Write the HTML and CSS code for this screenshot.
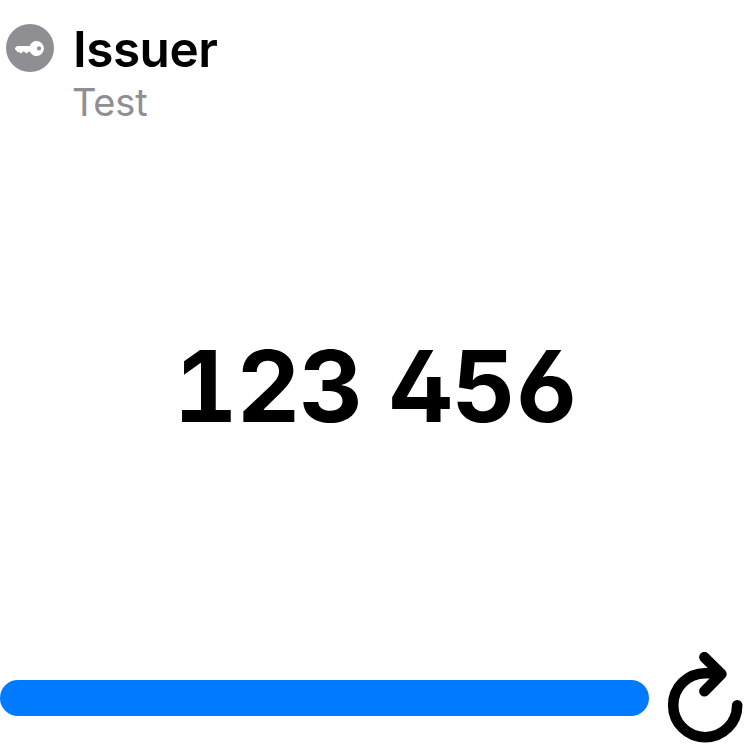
FILE: index.html
```
<!DOCTYPE html>
<html lang="en">
<head>
<meta charset="utf-8">
<title>Issuer</title>
<link rel="stylesheet" href="styles.css">
</head>
<body>
<main class="widget">
  <header class="account">
    <svg class="key" viewBox="0 0 48 48" aria-hidden="true">
      <circle cx="24" cy="24" r="24" fill="#8e8e93"/>
      <path fill="#fff" fill-rule="evenodd" d="M23.6 22 C25.2 18.6 27.4 17 30.4 17 A7.5 7.5 0 0 1 30.4 32 C27.4 32 25.2 30.4 23.6 27.2 L20.3 29.6 L17.9 27.2 L14.5 29.6 L12.8 27.8 L11.8 28.6 L9.2 25.3 Q8.6 24.5 9.2 23.7 L10.4 22.5 Q10.9 22 11.6 22 Z M33 22.3 a2.1 2.1 0 1 0 0 4.2 a2.1 2.1 0 1 0 0 -4.2 Z"/>
    </svg>
    <div class="names">
      <h1 class="issuer">Issuer</h1>
      <p class="name">Test</p>
    </div>
  </header>
  <p class="code"><span>123</span><span>456</span></p>
  <footer class="controls">
    <div class="progress"></div>
    <svg class="refresh" viewBox="0 0 76 92" aria-hidden="true">
      <path d="M70.2 53.2 A32 32 0 1 1 38.2 21.2 H53"/>
      <path d="M37.4 5.2 L54.4 22 L37.4 39.2"/>
    </svg>
  </footer>
</main>
</body>
</html>
```
FILE: styles.css
```
* { box-sizing: border-box; margin: 0; padding: 0; }
body { background: #fff; font-family: Inter, sans-serif; color: #000; }
.widget {
  width: 750px;
  height: 750px;
  display: flex;
  flex-direction: column;
  justify-content: space-between;
  padding: 18px 7px 6px 0;
  overflow: hidden;
}
.account { display: flex; gap: 20px; padding-left: 6px; height: 102px; }
.key { width: 48px; height: 48px; margin-top: 6px; }
.issuer { font-size: 49.5px; line-height: 62px; font-weight: 600; letter-spacing: -0.5px; margin-left: -1px; }
.name { font-size: 38px; line-height: 44px; font-weight: 400; color: #8e8e93; letter-spacing: -0.2px; margin-left: -2px; }
.code {
  display: flex;
  justify-content: center;
  gap: 27px;
  padding-left: 8px;
  font-size: 99px;
  line-height: 120px;
  font-weight: 650;
  letter-spacing: -1.2px;
  font-feature-settings: "tnum", "cv02", "cv03";
}
.controls { display: flex; align-items: center; justify-content: space-between; height: 92px; }
.progress { width: 649px; height: 36px; border-radius: 18px; background: #007aff; }
.refresh { width: 76px; height: 92px; fill: none; stroke: #000; stroke-width: 10.6; stroke-linecap: round; stroke-linejoin: round; }
```
